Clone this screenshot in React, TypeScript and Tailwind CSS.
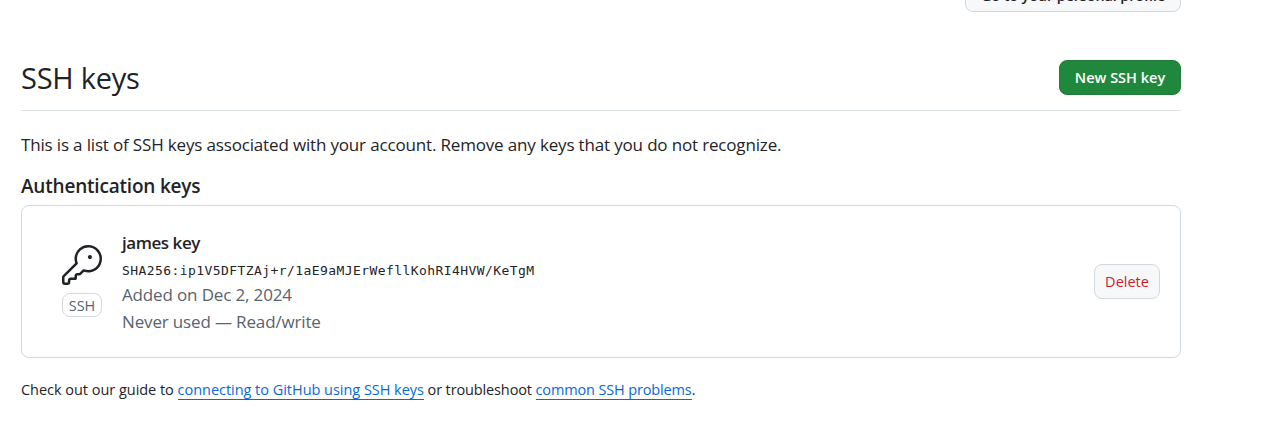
function KeyIcon() {
  return (
    <svg viewBox="0 0 24 24" className="block h-10 w-10 fill-[#1f2328]" aria-hidden="true">
      <path d="M16.75 8.5a1.25 1.25 0 1 0 0-2.5 1.25 1.25 0 0 0 0 2.5Z" />
      <path d="M15.75 0a8.25 8.25 0 1 1-2.541 16.101l-1.636 1.636a1.744 1.744 0 0 1-1.237.513H9.25a.25.25 0 0 0-.25.25v1.448a.876.876 0 0 1-.256.619l-.214.213a.75.75 0 0 1-.545.22H5.25a.25.25 0 0 0-.25.25v1A1.75 1.75 0 0 1 3.25 24h-1.5A1.75 1.75 0 0 1 0 22.25v-2.836c0-.464.185-.908.513-1.236l7.386-7.388A8.249 8.249 0 0 1 15.75 0ZM9 8.25a6.733 6.733 0 0 0 .463 2.462.75.75 0 0 1-.168.804l-7.722 7.721a.25.25 0 0 0-.073.177v2.836c0 .138.112.25.25.25h1.5a.25.25 0 0 0 .25-.25v-1c0-.966.784-1.75 1.75-1.75H7.5v-1c0-.966.784-1.75 1.75-1.75h1.086a.25.25 0 0 0 .177-.073l1.971-1.972a.75.75 0 0 1 .804-.168A6.75 6.75 0 1 0 9 8.25Z" />
    </svg>
  );
}

export default function App() {
  return (
    <div className="h-[435px] w-[1272px] overflow-hidden bg-white font-['Open_Sans',sans-serif] whitespace-nowrap text-[#1f2328]">
      <main className="ml-[21px] w-[1160px]">
        <div className="flex h-3 items-end justify-end">
          <button className="flex h-[35px] w-[216px] shrink-0 items-center justify-center rounded-lg border border-[#d1d9e0] bg-[#f6f8fa] pt-0.5 text-[14.5px] font-semibold tracking-[-0.15px]">
            Go to your personal profile
          </button>
        </div>
        <header className="mt-12 flex h-[51px] items-start justify-between border-b border-[#dfe4e9]">
          <h1 className="text-[29px] leading-[35px] font-normal tracking-[-0.25px]">SSH keys</h1>
          <button className="flex h-[35px] w-[122px] items-center justify-center rounded-lg border border-[#1f7d39] bg-[#1f883d] text-[14.5px] font-semibold text-white">
            New SSH key
          </button>
        </header>
        <p className="mt-5 text-[17px] leading-7 tracking-[-0.163px]">
          This is a list of SSH keys associated with your account. Remove any keys that you do not recognize.
        </p>
        <h2 className="mt-[13px] text-[19px] leading-7 font-semibold tracking-[-0.2px]">Authentication keys</h2>
        <section className="mt-[5px] flex h-[153px] items-center rounded-lg border border-[#d1d9e0] pr-5 pl-10">
          <div className="-mt-0.5 flex w-10 flex-col items-center gap-2">
            <KeyIcon />
            <div className="flex h-6 w-10 items-center justify-center rounded-lg border border-[#d1d9e0] pt-0.5 text-[14.5px] text-[#59636e]">
              SSH
            </div>
          </div>
          <div className="-mt-0.5 ml-5 flex-1 text-[17px] leading-[27px] tracking-[-0.15px] text-[#59636e]">
            <h3 className="pt-0.5 font-semibold tracking-[-0.45px] text-[#1f2328]">james key</h3>
            <div className="pt-[5px] font-['DejaVu_Sans_Mono',monospace] text-[13px] leading-5 tracking-[0.424px] text-[#1f2328]">
              SHA256:ip1V5DFTZAj+r/1aE9aMJErWefllKohRI4HVW/KeTgM
            </div>
            <div>Added on Dec 2, 2024</div>
            <div>Never used — Read/write</div>
          </div>
          <button className="flex h-[35px] w-[66px] items-center justify-center rounded-lg border border-[#d1d9e0] bg-[#f6f8fa] text-[14.5px] text-[#cf222e]">
            Delete
          </button>
        </section>
        <p className="mt-5 text-[14.5px] leading-6 tracking-[-0.03px]">
          Check out our guide to{" "}
          <a className="border-b border-[#0969da] text-[#0969da]">connecting to GitHub using SSH keys</a>
          <span className="tracking-[-0.13px]">{" or troubleshoot "}</span>
          <a className="border-b border-[#0969da] tracking-[-0.14px] text-[#0969da]">common SSH problems</a>.
        </p>
      </main>
    </div>
  );
}
